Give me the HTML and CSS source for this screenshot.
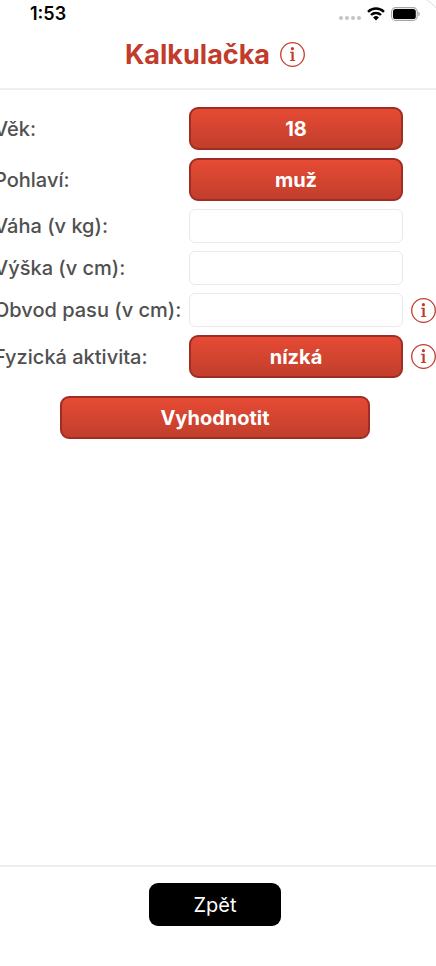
FILE: index.html
```html
<!DOCTYPE html>
<html lang="cs">
<head>
<meta charset="utf-8">
<meta name="viewport" content="width=device-width, initial-scale=1">
<title>Kalkulačka</title>
<link rel="stylesheet" href="styles.css">
</head>
<body>
<svg class="defs" aria-hidden="true">
  <symbol id="info" viewBox="0 0 25 25">
    <circle cx="12.5" cy="12.5" r="11.8" fill="none" stroke="currentColor" stroke-width="1.3"/>
    <circle cx="12.4" cy="6.7" r="1.6" fill="currentColor"/>
    <path d="M10 9.8h3.7v8.1l1.6.3v.9H9.9v-.9l1.6-.3v-6.9l-1.5-.3z" fill="currentColor"/>
  </symbol>
</svg>
<div class="screen">
  <svg class="corner" viewBox="0 0 10 10" aria-hidden="true"><path d="M1 0q5 3 9 8" fill="none" stroke="#dcdcdc"/></svg>
  <div class="status">
    <span class="time">1:53</span>
    <span class="signals">
      <svg class="dots" viewBox="0 0 22 4" aria-hidden="true"><g fill="#c4c4c4"><circle cx="2" cy="2" r="2"/><circle cx="8" cy="2" r="2"/><circle cx="14" cy="2" r="2"/><circle cx="20" cy="2" r="2"/></g></svg>
      <svg class="wifi" viewBox="0 0 18 14" aria-hidden="true"><g fill="none" stroke="#000" stroke-width="2.4"><path d="M1 4.8a11.5 11.5 0 0 1 16 0"/><path d="M4 8a7.1 7.1 0 0 1 10 0"/></g><path d="M9 13.4l-2.9-2.9a4.2 4.2 0 0 1 5.8 0z"/></svg>
      <svg class="battery" viewBox="0 0 29 14" aria-hidden="true"><rect x=".6" y=".6" width="25.6" height="12.8" rx="4" fill="none" stroke="#a5a5a5" stroke-width="1.1"/><rect x="2" y="2" width="22.8" height="10" rx="2.6"/><path d="M27.3 4.8q1.5.6 1.5 2.2t-1.5 2.2z" fill="#a5a5a5"/></svg>
    </span>
  </div>
  <header class="header">
    <h1>Kalkulačka</h1>
    <button class="info" type="button" aria-label="Informace"><svg><use href="#info"/></svg></button>
  </header>
  <main class="main">
    <form class="form">
      <div class="row">
        <label for="vek">Věk:</label>
        <button class="red" id="vek" type="button">18</button>
      </div>
      <div class="row">
        <label for="pohlavi">Pohlaví:</label>
        <button class="red" id="pohlavi" type="button">muž</button>
      </div>
      <div class="row">
        <label for="vaha">Váha (v kg):</label>
        <input id="vaha" type="text" inputmode="decimal">
      </div>
      <div class="row">
        <label for="vyska">Výška (v cm):</label>
        <input id="vyska" type="text" inputmode="decimal">
      </div>
      <div class="row">
        <label for="pas">Obvod pasu (v cm):</label>
        <input id="pas" type="text" inputmode="decimal">
        <button class="info" type="button" aria-label="Informace"><svg><use href="#info"/></svg></button>
      </div>
      <div class="row">
        <label for="aktivita">Fyzická aktivita:</label>
        <button class="red" id="aktivita" type="button">nízká</button>
        <button class="info" type="button" aria-label="Informace"><svg><use href="#info"/></svg></button>
      </div>
      <div class="submit">
        <button class="red" type="submit">Vyhodnotit</button>
      </div>
    </form>
  </main>
  <footer class="footer">
    <button class="back" type="button">Zpět</button>
  </footer>
</div>
</body>
</html>
```

FILE: styles.css
```css
* { box-sizing: border-box; }

body {
  margin: 0;
  background: #fff;
  color: #505050;
  font-family: Inter, "Liberation Sans", sans-serif;
}

button, input { font: inherit; margin: 0; }
button { padding: 0; border: 0; cursor: pointer; }

.defs { position: absolute; width: 0; height: 0; }

.screen {
  position: relative;
  display: flex;
  flex-direction: column;
  min-height: 100vh;
  overflow: hidden;
}
.corner { position: absolute; top: 0; right: 0; width: 10px; height: 10px; }

.status {
  display: flex;
  justify-content: space-between;
  height: 27px;
  padding: 0 16px 0 30px;
  align-items: center;
  color: #000;
}
.time { font-size: 18px; font-weight: 600; line-height: 27px; }
.signals { display: flex; align-items: center; gap: 6px; }
.dots { width: 22px; height: 4px; margin-top: 8px; }
.wifi { width: 18px; height: 14px; }
.battery { width: 29px; height: 14px; }

.header {
  display: flex;
  align-items: center;
  justify-content: center;
  gap: 10px;
  height: 63px;
  padding: 0 6px 6px 0;
  border-bottom: 2px solid #eee;
}
h1 {
  margin: 0;
  color: #c23c2c;
  font-size: 27px;
  font-weight: 700;
  line-height: 36px;
}

.info {
  width: 25px;
  height: 25px;
  background: none;
  color: #c23c2c;
}
.info svg { display: block; width: 25px; height: 25px; }

.main { flex: 1; padding-top: 17px; }
.form { display: flex; flex-direction: column; gap: 8px; }
.row {
  display: grid;
  grid-template-columns: 187px 1fr 25px;
  column-gap: 8px;
  align-items: center;
  margin-left: -6px;
}
.row label {
  font-size: 20px;
  font-weight: 500;
  line-height: 24px;
  white-space: nowrap;
}
.row input {
  width: 100%;
  height: 34px;
  padding: 0 8px;
  border: 1px solid #e9e9e9;
  border-radius: 6px;
  background: #fff;
}

.red {
  height: 43px;
  border: 2px solid #9f2d25;
  border-radius: 9px;
  background: linear-gradient(#e84b35, #bf3e2b) border-box;
  color: #fff;
  font-size: 20px;
  font-weight: 700;
}

.submit { display: flex; justify-content: center; padding: 10px 6px 0 0; }
.submit .red { width: 72%; }

.footer {
  display: flex;
  justify-content: center;
  height: 101px;
  padding: 16px 6px 0 0;
  border-top: 2px solid #eee;
}
.back {
  width: 132px;
  height: 43px;
  border-radius: 9px;
  background: #000;
  color: #fff;
  font-size: 20px;
}
```
